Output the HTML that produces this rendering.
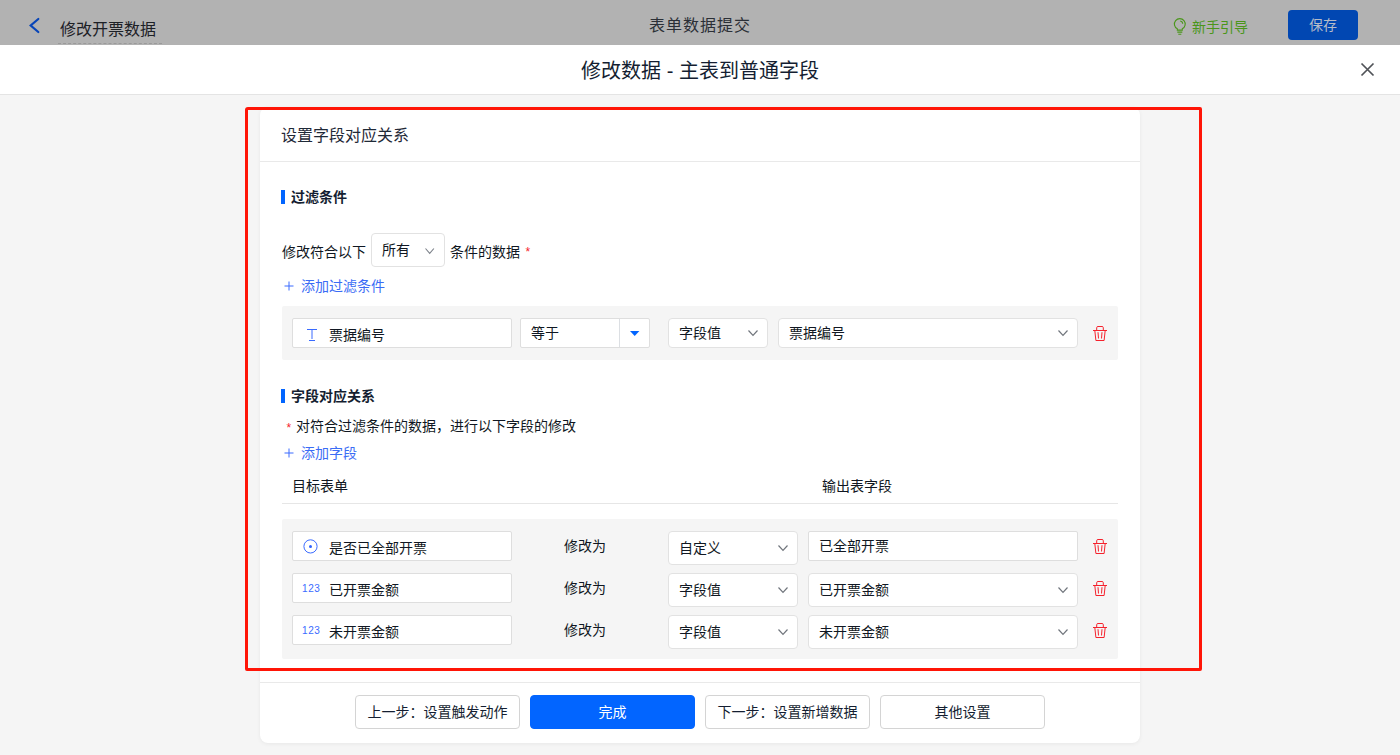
<!DOCTYPE html>
<html lang="zh-CN">
<head>
<meta charset="utf-8">
<title>修改数据 - 主表到普通字段</title>
<style>
*{box-sizing:border-box;margin:0;padding:0}
html,body{width:1400px;height:755px;overflow:hidden}
body{position:relative;background:#f5f5f5;font-family:"Liberation Sans","Noto Sans CJK SC",sans-serif;font-size:14px;color:#101722;-webkit-font-smoothing:antialiased}
.abs{position:absolute}
.t{position:absolute;white-space:nowrap;line-height:20px;height:20px}
/* top bar */
#topbar{left:0;top:0;width:1400px;height:45px;background:#b2b2b2}
#topbar .name{left:58px;top:20px;width:104px;padding-left:2px;font-size:16px;color:#1c2026;border-bottom:1px dashed #9a9a9a;height:24px;line-height:20px}
#topbar .mid{left:600px;width:200px;text-align:center;top:16px;font-size:16px;letter-spacing:1px;color:#2b2f36}
#topbar .guide{left:1192px;top:17px;color:#4a961a}
#save{left:1288px;top:10px;width:70px;height:30px;border-radius:4px;background:#0147b2;color:#b6bcc8;text-align:center;line-height:30px}
/* modal header */
#mhead{left:0;top:45px;width:1400px;height:50px;background:#fff;border-bottom:1px solid #e4e4e4}
#mhead .title{left:0;width:1400px;text-align:center;top:12px;font-size:20px;line-height:28px;height:28px;color:#141e31}
/* card */
#card{left:260px;top:107px;width:880px;height:636px;background:#fff;border-radius:8px;box-shadow:0 1px 4px rgba(0,0,0,0.06)}
#chead{left:0;top:0;width:880px;height:55px;border-bottom:1px solid #e9e9e9}
#chead .t{left:21px;top:19px;font-size:16px;color:#1f2937}
.bar{position:absolute;width:4px;height:14px;background:#0265ff}
.sec{font-weight:bold;color:#141e31}
.blue{color:#3b6cf5}
.red{color:#f5222d}
.box{position:absolute;background:#fff;border:1px solid #dedede;border-radius:2px}
.box.r4{border-radius:4px;border-color:#e2e2e2}
.box.nm .t{margin-top:-8px}
.box .t{top:50%;margin-top:-10px}
.gray{position:absolute;background:#f5f5f5;border-radius:2px}
.btn{position:absolute;top:695px;width:165px;height:34px;border:1px solid #d4d4d4;border-radius:4px;background:#fff;text-align:center;line-height:32px;color:#141e31}
.btn.pri{background:#0265ff;border-color:#0265ff;color:#fff}
#redrect{left:245px;top:107px;width:957px;height:564px;border:3px solid #ff1507;border-radius:3px 2px 2px 2px}
svg{position:absolute;overflow:visible}
</style>
</head>
<body>
<!-- top bar -->
<div id="topbar" class="abs">
  <svg style="left:29px;top:18px" width="10" height="15" viewBox="0 0 10 15"><path d="M9.3 1 L1.7 7.5 L9.3 14" fill="none" stroke="#0845b8" stroke-width="2.2" stroke-linecap="round"/></svg>
  <div class="t name">修改开票数据</div>
  <div class="t mid">表单数据提交</div>
  <svg style="left:1173px;top:18.4px" width="13" height="17" viewBox="0 0 13 17"><path d="M4.3 12.1 V10.8 A5.4 5.4 0 1 1 9.3 10.8 V12.1 Z M4.3 14.1 H9.3 M5.3 16.3 H8.3 M7.2 3 A3 3 0 0 1 9.7 5.8" fill="none" stroke="#4a961a" stroke-width="1.1"/></svg>
  <div class="t guide">新手引导</div>
  <div id="save" class="abs">保存</div>
</div>
<!-- modal header -->
<div id="mhead" class="abs">
  <div class="t title">修改数据 - 主表到普通字段</div>
  <svg style="left:1361px;top:18.4px" width="13" height="13" viewBox="0 0 13 13"><path d="M0.5 0.5 L12.5 12.5 M12.5 0.5 L0.5 12.5" fill="none" stroke="#505358" stroke-width="1.7"/></svg>
</div>
<!-- card -->
<div id="card" class="abs">
  <div id="chead" class="abs"><div class="t">设置字段对应关系</div></div>
</div>

<!-- section 1 -->
<div class="bar" style="left:281px;top:190px"></div>
<div class="t sec" style="left:291px;top:187px">过滤条件</div>

<div class="t" style="left:282px;top:242px">修改符合以下</div>
<div class="box r4" style="left:371px;top:233px;width:74px;height:34px">
  <div class="t" style="left:10px">所有</div>
  <svg style="left:53px;top:13.5px" width="9.4" height="6" viewBox="0 0 9.4 6"><path d="M0.5 0.5 L4.7 5.4 L8.9 0.5" fill="none" stroke="#7d828a" stroke-width="1.1"/></svg>
</div>
<div class="t" style="left:450px;top:242px">条件的数据</div>
<div class="t red" style="left:525.5px;top:242px;font-size:12px">*</div>

<div class="t blue" style="left:284px;top:276px"><span style="display:inline-block;width:17px"></span><svg style="left:0;top:5px" width="10" height="10" viewBox="0 0 10 10"><path d="M5 0.5 V9.5 M0.5 5 H9.5" fill="none" stroke="#3a6bff" stroke-width="1"/></svg>添加过滤条件</div>

<div class="gray" style="left:282px;top:306px;width:836px;height:54px"></div>
<div class="box nm" style="left:292px;top:318px;width:220px;height:30px">
  <svg style="left:14px;top:10px" width="10" height="12" viewBox="0 0 10 12"><path d="M0 0.5 H10 M5 0.5 V10 M2 11.5 H8" fill="none" stroke="#3a6bff" stroke-width="1"/></svg>
  <div class="t" style="left:36px">票据编号</div>
</div>
<div class="box" style="left:520px;top:318px;width:130px;height:30px">
  <div class="t" style="left:10px">等于</div>
  <div class="abs" style="left:98px;top:0;width:1px;height:28px;background:#dcdfe3"></div>
  <svg style="left:109px;top:12px" width="10" height="5" viewBox="0 0 10 5"><path d="M0 0 H9.4 L4.7 5 Z" fill="#0265ff"/></svg>
</div>
<div class="box r4" style="left:668px;top:318px;width:100px;height:30px">
  <div class="t" style="left:10px">字段值</div>
  <svg style="left:78.5px;top:11px" width="10" height="6" viewBox="0 0 10 6"><path d="M0.5 0.5 L5 5.3 L9.5 0.5" fill="none" stroke="#70757c" stroke-width="1.2"/></svg>
</div>
<div class="box r4" style="left:778px;top:318px;width:300px;height:30px">
  <div class="t" style="left:10px">票据编号</div>
  <svg style="left:278.5px;top:11px" width="10" height="6" viewBox="0 0 10 6"><path d="M0.5 0.5 L5 5.3 L9.5 0.5" fill="none" stroke="#70757c" stroke-width="1.2"/></svg>
</div>
<svg class="trash" style="left:1093px;top:326px" width="14" height="15" viewBox="0 0 14 15"><path d="M0 4.5 H14 M3.7 4.5 V1.7 Q3.7 0.5 4.9 0.5 H9.1 Q10.3 0.5 10.3 1.7 V4.5 M1.8 4.5 L2.9 14.5 H11.1 L12.2 4.5 M5 6.2 L5.5 12.5 M9 6.2 L8.5 12.5" fill="none" stroke="#f5222d" stroke-width="1"/></svg>

<!-- section 2 -->
<div class="bar" style="left:281px;top:389px"></div>
<div class="t sec" style="left:291px;top:386px">字段对应关系</div>
<div class="t red" style="left:286.6px;top:418px;font-size:12px">*</div>
<div class="t" style="left:296px;top:416px">对符合过滤条件的数据，进行以下字段的修改</div>
<div class="t blue" style="left:284px;top:443px"><span style="display:inline-block;width:17px"></span><svg style="left:0;top:5px" width="10" height="10" viewBox="0 0 10 10"><path d="M5 0.5 V9.5 M0.5 5 H9.5" fill="none" stroke="#3a6bff" stroke-width="1"/></svg>添加字段</div>
<div class="t" style="left:292px;top:476px">目标表单</div>
<div class="t" style="left:822px;top:476px">输出表字段</div>
<div class="abs" style="left:282px;top:503px;width:836px;height:1px;background:#e6e6e6"></div>

<div class="gray" style="left:282px;top:519px;width:836px;height:140px"></div>

<!-- row 1 -->
<div class="box nm" style="left:292px;top:531px;width:220px;height:30px">
  <svg style="left:10px;top:7px" width="15" height="15" viewBox="0 0 15 15"><circle cx="7.5" cy="7.4" r="6.6" fill="none" stroke="#3a6bff" stroke-width="1"/><circle cx="7.5" cy="7.4" r="1.5" fill="#2f62ff"/></svg>
  <div class="t" style="left:36px">是否已全部开票</div>
</div>
<div class="t" style="left:564px;top:536px">修改为</div>
<div class="box r4" style="left:668px;top:531px;width:130px;height:34px">
  <div class="t" style="left:10px">自定义</div>
  <svg style="left:108.5px;top:13px" width="10" height="6" viewBox="0 0 10 6"><path d="M0.5 0.5 L5 5.3 L9.5 0.5" fill="none" stroke="#70757c" stroke-width="1.2"/></svg>
</div>
<div class="box" style="left:808px;top:531px;width:270px;height:30px">
  <div class="t" style="left:10px">已全部开票</div>
</div>
<svg class="trash" style="left:1093px;top:539px" width="14" height="15" viewBox="0 0 14 15"><path d="M0 4.5 H14 M3.7 4.5 V1.7 Q3.7 0.5 4.9 0.5 H9.1 Q10.3 0.5 10.3 1.7 V4.5 M1.8 4.5 L2.9 14.5 H11.1 L12.2 4.5 M5 6.2 L5.5 12.5 M9 6.2 L8.5 12.5" fill="none" stroke="#f5222d" stroke-width="1"/></svg>

<!-- row 2 -->
<div class="box nm" style="left:292px;top:573px;width:220px;height:30px">
  <div class="t blue" style="left:9px;font-size:10px;letter-spacing:0.6px;margin-top:-9px;color:#3a6bff">123</div>
  <div class="t" style="left:36px">已开票金额</div>
</div>
<div class="t" style="left:564px;top:578px">修改为</div>
<div class="box r4" style="left:668px;top:573px;width:130px;height:34px">
  <div class="t" style="left:10px">字段值</div>
  <svg style="left:108.5px;top:13px" width="10" height="6" viewBox="0 0 10 6"><path d="M0.5 0.5 L5 5.3 L9.5 0.5" fill="none" stroke="#70757c" stroke-width="1.2"/></svg>
</div>
<div class="box r4" style="left:808px;top:573px;width:270px;height:34px">
  <div class="t" style="left:10px">已开票金额</div>
  <svg style="left:248.5px;top:13px" width="10" height="6" viewBox="0 0 10 6"><path d="M0.5 0.5 L5 5.3 L9.5 0.5" fill="none" stroke="#70757c" stroke-width="1.2"/></svg>
</div>
<svg class="trash" style="left:1093px;top:581px" width="14" height="15" viewBox="0 0 14 15"><path d="M0 4.5 H14 M3.7 4.5 V1.7 Q3.7 0.5 4.9 0.5 H9.1 Q10.3 0.5 10.3 1.7 V4.5 M1.8 4.5 L2.9 14.5 H11.1 L12.2 4.5 M5 6.2 L5.5 12.5 M9 6.2 L8.5 12.5" fill="none" stroke="#f5222d" stroke-width="1"/></svg>

<!-- row 3 -->
<div class="box nm" style="left:292px;top:615px;width:220px;height:30px">
  <div class="t blue" style="left:9px;font-size:10px;letter-spacing:0.6px;margin-top:-9px;color:#3a6bff">123</div>
  <div class="t" style="left:36px">未开票金额</div>
</div>
<div class="t" style="left:564px;top:620px">修改为</div>
<div class="box r4" style="left:668px;top:615px;width:130px;height:34px">
  <div class="t" style="left:10px">字段值</div>
  <svg style="left:108.5px;top:13px" width="10" height="6" viewBox="0 0 10 6"><path d="M0.5 0.5 L5 5.3 L9.5 0.5" fill="none" stroke="#70757c" stroke-width="1.2"/></svg>
</div>
<div class="box r4" style="left:808px;top:615px;width:270px;height:34px">
  <div class="t" style="left:10px">未开票金额</div>
  <svg style="left:248.5px;top:13px" width="10" height="6" viewBox="0 0 10 6"><path d="M0.5 0.5 L5 5.3 L9.5 0.5" fill="none" stroke="#70757c" stroke-width="1.2"/></svg>
</div>
<svg class="trash" style="left:1093px;top:623px" width="14" height="15" viewBox="0 0 14 15"><path d="M0 4.5 H14 M3.7 4.5 V1.7 Q3.7 0.5 4.9 0.5 H9.1 Q10.3 0.5 10.3 1.7 V4.5 M1.8 4.5 L2.9 14.5 H11.1 L12.2 4.5 M5 6.2 L5.5 12.5 M9 6.2 L8.5 12.5" fill="none" stroke="#f5222d" stroke-width="1"/></svg>

<!-- footer -->
<div class="abs" style="left:260px;top:682px;width:880px;height:1px;background:#e9e9e9"></div>
<div class="btn" style="left:355px">上一步：设置触发动作</div>
<div class="btn pri" style="left:530px">完成</div>
<div class="btn" style="left:705px">下一步：设置新增数据</div>
<div class="btn" style="left:880px">其他设置</div>

<!-- red annotation rectangle -->
<div id="redrect" class="abs"></div>
</body>
</html>
